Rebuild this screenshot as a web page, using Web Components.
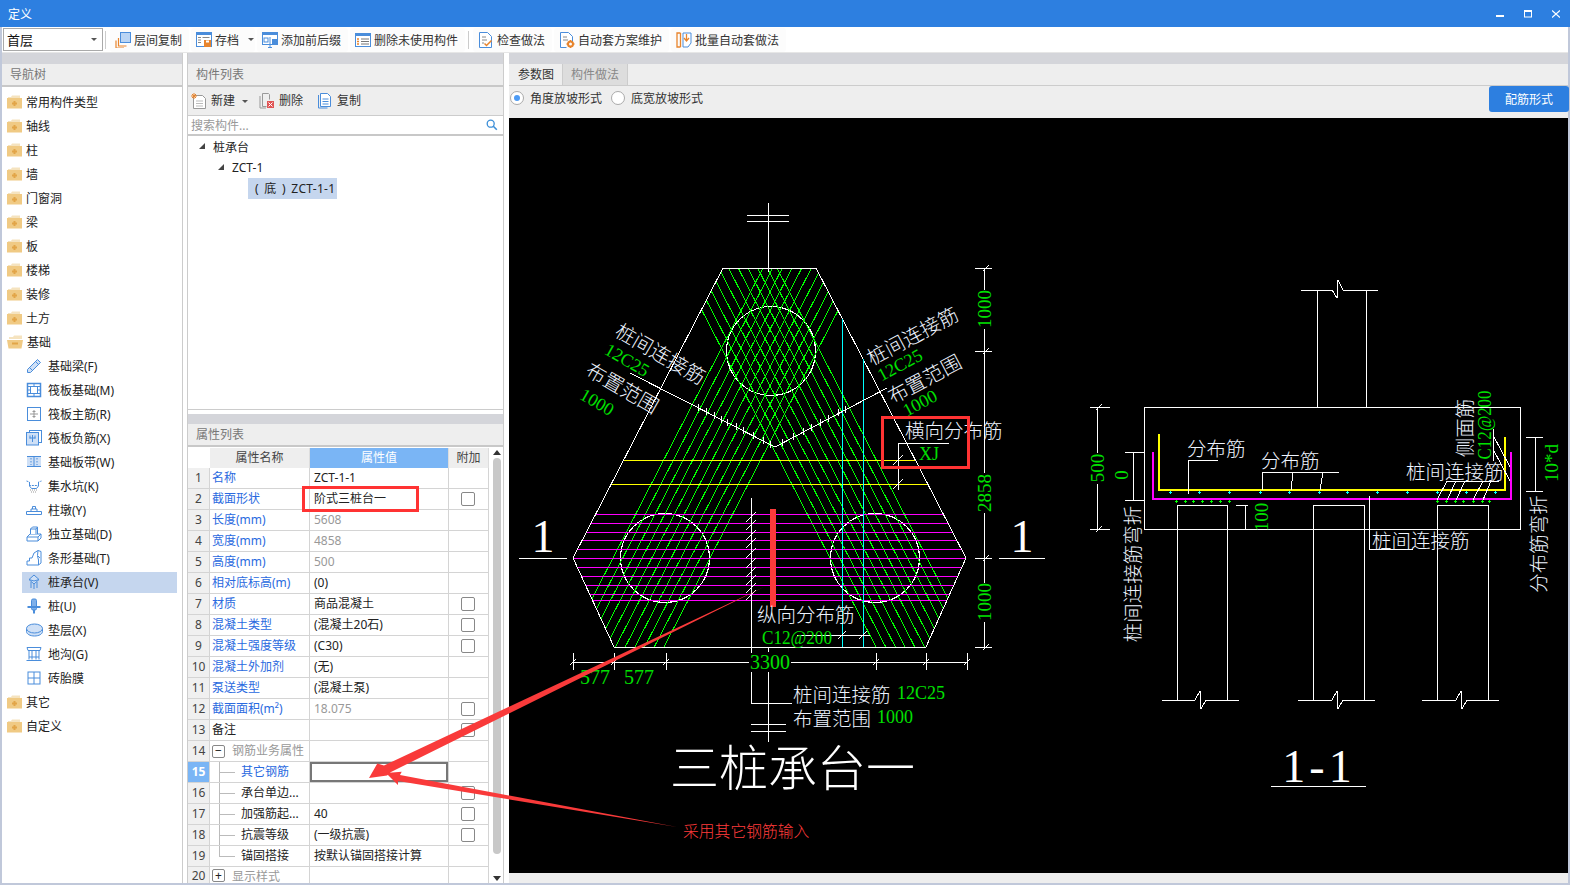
<!DOCTYPE html>
<html lang="zh">
<head>
<meta charset="utf-8">
<title>定义</title>
<style>
    html, body { margin: 0; padding: 0; background: #fff; overflow: hidden; }
</style>
</head>
<body>
<def-app></def-app>
<script>
const BLUE = '#4a8ddb';
const PALE = '#cfe0f6';
const ORANGE = '#e8842c';

const svg16 = (body, size = 16) => `<svg width="${size}" height="${size}" viewBox="0 0 16 16" fill="none" stroke="${BLUE}" stroke-width="1" style="display:block;flex:none">${body}</svg>`;

const ICONS = {
    folder: `<svg width="15" height="14" viewBox="0 0 15 14" style="display:block;flex:none"><path d="M1 2h3l1-1.500h8V3H1z" fill="#f5e3bf"/><rect y="3" width="15" height="10.500" fill="#f0ca84"/><path d="M6.500 6h2v1.500H10v2H8.500V11h-2V9.500H5v-2h1.500z" fill="#e2a548"/></svg>`,
    folderOpen: `<svg width="16" height="14" viewBox="0 0 16 14" style="display:block;flex:none"><path d="M2 2h4l1-1.500h8V4H2z" fill="#f5e3bf"/><path d="M0 5h16l-1.500 8.500h-13z" fill="#f0ca84"/><rect x="5" y="7.500" width="6" height="2" fill="#e2a548"/></svg>`,
    beam: svg16(`<path d="M1.500 11.500 11.500 1.500l3 3-10 10h-3z" fill="${PALE}"/><path d="M3.500 9.500l3 3M9.500 3.500l3 3"/>`),
    raft: svg16(`<rect x="1.500" y="1.500" width="13" height="13" fill="#fff" stroke-width="1.500"/><rect x="4.500" y="4.500" width="7" height="7"/><path d="M1.500 4.500h13M1.500 8h3M11.500 8h3M8 1.500v3M8 11.500v3M1.500 11.500h13"/>`),
    raftMain: svg16(`<rect x="1.500" y="1.500" width="13" height="13"/><path d="M8 4v8M4 8h8M6.500 5.500h3M6.500 10.500h3" stroke="#999"/>`),
    raftNeg: svg16(`<rect x="3.500" y="0.500" width="12" height="12" fill="#fff"/><rect x="0.500" y="2.500" width="12" height="12.500" fill="${PALE}"/><path d="M6.500 5v7M3.500 8h6M4 5.500v3M9 5.500v3"/>`),
    strip: svg16(`<rect x="1" y="2" width="14" height="11" fill="${PALE}" stroke="none"/><path d="M1 2.500h14M1 12.500h14M8 2.500v10"/><path d="M5 4v7M11 4v7" stroke-dasharray="1.500 1.500"/>`),
    sump: svg16(`<path d="M0.500 3l3 1v3.500h9V4l3-1" stroke-dasharray="2 1"/><path d="M3.500 4v4l2 2.500h5l2-2.500V4"/><path d="M4 12h8M5 14h6" stroke="#999" stroke-dasharray="1 1"/>`),
    pier: svg16(`<path d="M0.500 9.500h15v3H0.500z" /><path d="M5 9.500V7h6v2.500M6.500 7V4.500h3V7"/>`),
    footing: svg16(`<path d="M1 11h11v4H1zM1 11l3-3h11l-3 3M12 15l3-3V8"/><path d="M4.500 8V3l2-2h5v7M4.500 3h5.500l1.500-2M10 3v5" fill="#fff"/>`),
    stripF: svg16(`<path d="M1 15v-4h2.500V8H6L8 3l4-2.500 3 1V13l-2.500 2z" fill="#fff"/><path d="M12 .5l-.5 5L14 8M12.500 15v-5l-1-4"/>`),
    cap: svg16(`<path d="M8 1l5 4.500L8 10 3 5.500z" fill="${PALE}"/><path d="M5 8v6M8 10v5M11 8v6M3 5.500 8 7l5-1.500" stroke="${BLUE}"/>`),
    pile: svg16(`<rect x="5.500" y="1" width="5" height="11" rx="1.500" fill="#7fb0ea"/><path d="M1.500 9h13" stroke-width="2"/><path d="M8 12v3.500" stroke-width="2"/>`),
    cushion: `<svg width="17" height="14" viewBox="0 0 17 14" style="display:block;flex:none" fill="${PALE}" stroke="${BLUE}"><path d="M.5 5.500v3c0 2.500 3.500 4.500 8 4.500s8-2 8-4.500v-3"/><ellipse cx="8.500" cy="5.500" rx="8" ry="4.500"/></svg>`,
    trench: svg16(`<path d="M1 1.500h14l-1 3H2zM3 4.500v9M6 4.500v9M10 4.500v9M13 4.500v9M.5 14.500h15M3 11h10"/>`),
    brick: svg16(`<rect x="2" y="2" width="12" height="12"/><path d="M8 2v12M2 8h12"/>`),
    floorCopy: svg16(`<rect x="5.500" y="0.500" width="10" height="10" fill="#b9d4f4" stroke="${BLUE}"/><path d="M3.500 6v8h8M1 8.500V16h8" stroke="${ORANGE}" stroke-width="1.200"/>`),
    archive: svg16(`<rect x="0.500" y="0.500" width="15" height="14" fill="#fff"/><rect x="0" y="0" width="16" height="3" fill="${BLUE}" stroke="none"/><path d="M2 5.500h3M2 8h3M2 10.500h3M6.500 5.500h7" stroke="#888"/><rect x="8" y="8" width="7" height="7" fill="#e8842c" stroke="none"/><rect x="10" y="8.500" width="3" height="2" fill="#fff" stroke="none"/>`),
    prefix: svg16(`<rect x="0.500" y="0.500" width="15" height="12" fill="#fff"/><rect x="0" y="0" width="16" height="3" fill="${BLUE}" stroke="none"/><rect x="2" y="6" width="4" height="4" fill="#fff"/><rect x="10" y="7" width="6" height="6" fill="${BLUE}" stroke="none"/><path d="M8 5v10.500M6 15.500h4" stroke="${BLUE}"/>`),
    unused: svg16(`<rect x="0.500" y="1.500" width="15" height="13" fill="#fff"/><rect x="0" y="1" width="16" height="3" fill="${BLUE}" stroke="none"/><path d="M2 7h2M2 9.500h2M2 12h2" stroke="${ORANGE}" stroke-width="1.500"/><path d="M6 7h8M6 9.500h8M6 12h8" stroke="#777"/>`),
    check: svg16(`<path d="M1.500 0.500h8l4 4v11h-12z" fill="#fff"/><path d="M4 5h4M4 8h5M4 11h2" stroke="#888"/><path d="M6.500 11.500l2 2 5-5" stroke="${ORANGE}" stroke-width="1.500"/>`),
    gearDoc: svg16(`<path d="M1.500 0.500h8l4 4v6M1.500 0.500v15h6" fill="#fff"/><path d="M4 5h4M4 8h5" stroke="#888"/><circle cx="11.500" cy="12" r="2.500" stroke="${ORANGE}" stroke-width="2"/><path d="M11.500 8v1.500M11.500 14.500V16M7.500 12H9M14 12h1.500" stroke="${ORANGE}" stroke-width="1.500"/>`),
    batch: svg16(`<path d="M4.500 1H1v14h3.500M1 1v14M4.500 1v14" stroke="${ORANGE}" stroke-width="1.300"/><path d="M7 1h8v10l-3 4H7z" fill="#fff"/><path d="M10.500 2v6M8 6l2.500 3L13 6" stroke="${ORANGE}" stroke-width="1.300"/>`),
    newDoc: svg16(`<path d="M2.500 2.500h9l3 3v10h-12z" fill="#fff" stroke="#999"/><path d="M5 8h7M5 10.500h7M5 13h7" stroke="#bbb"/><path d="M3 0v6M0 3h6M1 1l4 4M5 1 1 5" stroke="${ORANGE}"/>`),
    delDoc: svg16(`<path d="M3.500 0.500h6l1 1v5M3.500 .5v13h4" stroke="#999"/><path d="M1 3v12h6" stroke="#999"/><rect x="8" y="8" width="7" height="7" fill="#e05555" stroke="none"/><path d="M9.500 9.500l4 4M13.500 9.500l-4 4" stroke="#fff"/>`),
    copyDoc: svg16(`<path d="M1.500 2v13h9" /><path d="M3.500 0.500h7l3 3v10h-10z" fill="#fff"/><path d="M5.500 6h6M5.500 8.500h6M5.500 11h6"/>`),
    search: svg16(`<circle cx="6.500" cy="6.500" r="4" stroke="#3c8fd8" stroke-width="1.500"/><path d="M9.500 9.500l4 4" stroke="#3c8fd8" stroke-width="1.800"/>`, 14)
};

class PanelHead extends HTMLElement {
    constructor() {
        super();
        this.attachShadow({ mode: 'open' });
    }

    connectedCallback() {
        this.shadowRoot.innerHTML = `
            <style>
                :host { display: block; flex: none; }
                .band { height: var(--band, 11px); background: #d4d5da; }
                .title { height: 21px; line-height: 21px; padding-left: 8px; background: #eeeeee; color: #777; border-bottom: 2px solid #c8c8c8; }
            </style>
            <div class="band"></div>
            <div class="title"><slot></slot></div>
        `;
    }
}

class TitleBar extends HTMLElement {
    constructor() {
        super();
        this.attachShadow({ mode: 'open' });
    }

    connectedCallback() {
        this.shadowRoot.innerHTML = `
            <style>
                :host { display: flex; align-items: center; height: 27px; background: #2d7fe0; color: #fff; padding-left: 8px; }
                .name { flex: 1; }
                .btn { width: 28px; display: flex; justify-content: center; }
                svg { display: block; }
            </style>
            <div class="name">定义</div>
            <div class="btn"><svg width="8" height="8" viewBox="0 0 8 8"><rect y="5" width="8" height="2" fill="#fff"/></svg></div>
            <div class="btn"><svg width="8" height="8" viewBox="0 0 8 8" fill="none" stroke="#fff"><rect x=".5" y="1" width="7" height="6"/><path d="M0 1h8" stroke-width="2"/></svg></div>
            <div class="btn"><svg width="8" height="8" viewBox="0 0 8 8" stroke="#fff" stroke-width="1.300"><path d="M0 .5l8 7M8 .5l-8 7"/></svg></div>
        `;
    }
}

class ToolItem extends HTMLElement {
    constructor() {
        super();
        this.attachShadow({ mode: 'open' });
    }

    connectedCallback() {
        const caret = this.hasAttribute('caret');
        this.shadowRoot.innerHTML = `
            <style>
                :host { display: flex; align-items: center; gap: 3px; height: 24px; padding: 0 7px 0 5px; margin-right: 2px; background: #fcfcfc; border-radius: 3px; color: #333; white-space: nowrap; }
                .caret { width: 0; height: 0; margin-right: -6px; border: 3.5px solid transparent; border-top: 3.5px solid #555; border-bottom: 0; margin-left: 6px; }
            </style>
            ${ICONS[this.getAttribute('icon')]}
            <slot></slot>
            ${caret ? '<span class="caret"></span>' : ''}
        `;
    }
}

class TopToolbar extends HTMLElement {
    constructor() {
        super();
        this.attachShadow({ mode: 'open' });
    }

    connectedCallback() {
        this.shadowRoot.innerHTML = `
            <style>
                :host { display: flex; align-items: center; height: 25px; background: #fff; border-bottom: 1px solid #e6e6e6; }
                .combo { height: 21px; margin-left: 1px; margin-right: 2px; border: 1px solid #aaa; display: flex; align-items: center; justify-content: space-between; padding: 0 5px 0 3px; box-sizing: content-box; width: 90px; font-size: 13px; color: #111; }
                .combo i { width: 0; height: 0; border: 3.5px solid transparent; border-top: 3.5px solid #555; border-bottom: 0; }
                .sep { width: 1px; height: 18px; background: #ccc; margin-right: 4px; }
            </style>
            <div class="combo"><span>首层</span><i></i></div>
            <div class="sep"></div>
            <tool-item icon="floorCopy">层间复制</tool-item>
            <tool-item icon="archive" caret>存档</tool-item>
            <tool-item icon="prefix">添加前后缀</tool-item>
            <tool-item icon="unused">删除未使用构件</tool-item>
            <div class="sep" style="margin-left:1px"></div>
            <tool-item icon="check">检查做法</tool-item>
            <tool-item icon="gearDoc">自动套方案维护</tool-item>
            <tool-item icon="batch">批量自动套做法</tool-item>
        `;
    }
}

class NavRow extends HTMLElement {
    constructor() {
        super();
        this.attachShadow({ mode: 'open' });
    }

    connectedCallback() {
        this.shadowRoot.innerHTML = `
            <style>
                :host { display: flex; align-items: center; height: 24px; padding-left: 5px; gap: 4px; color: #222; }
                :host([child]) { padding-left: 0; margin-left: 20px; margin-right: 5px; }
                .in { display: flex; align-items: center; height: 21px; flex: 1; }
                :host([child]) .in { padding-left: 4px; gap: 6px; }
                :host(:not([child])) .in { gap: 4px; }
                :host([selected]) .in { background: #c5d6ee; }
                .slotbox { width: 16px; display: flex; justify-content: center; flex: none; }
            </style>
            <div class="in">
                ${this.hasAttribute('child') ? `<span class="slotbox">${ICONS[this.getAttribute('icon')]}</span>` : ICONS[this.getAttribute('icon')]}
                <span><slot></slot></span>
            </div>
        `;
    }
}

class NavTree extends HTMLElement {
    constructor() {
        super();
        this.attachShadow({ mode: 'open' });
    }

    connectedCallback() {
        this.shadowRoot.innerHTML = `
            <style>
                :host { display: flex; flex-direction: column; width: 181px; flex: none; border-right: 1px solid #ccc; background: #fff; box-sizing: border-box; }
                .rows { padding-top: 3px; }
            </style>
            <panel-head>导航树</panel-head>
            <div class="rows">
                <nav-row icon="folder">常用构件类型</nav-row>
                <nav-row icon="folder">轴线</nav-row>
                <nav-row icon="folder">柱</nav-row>
                <nav-row icon="folder">墙</nav-row>
                <nav-row icon="folder">门窗洞</nav-row>
                <nav-row icon="folder">梁</nav-row>
                <nav-row icon="folder">板</nav-row>
                <nav-row icon="folder">楼梯</nav-row>
                <nav-row icon="folder">装修</nav-row>
                <nav-row icon="folder">土方</nav-row>
                <nav-row icon="folderOpen">基础</nav-row>
                <nav-row child icon="beam">基础梁(F)</nav-row>
                <nav-row child icon="raft">筏板基础(M)</nav-row>
                <nav-row child icon="raftMain">筏板主筋(R)</nav-row>
                <nav-row child icon="raftNeg">筏板负筋(X)</nav-row>
                <nav-row child icon="strip">基础板带(W)</nav-row>
                <nav-row child icon="sump">集水坑(K)</nav-row>
                <nav-row child icon="pier">柱墩(Y)</nav-row>
                <nav-row child icon="footing">独立基础(D)</nav-row>
                <nav-row child icon="stripF">条形基础(T)</nav-row>
                <nav-row child selected icon="cap">桩承台(V)</nav-row>
                <nav-row child icon="pile">桩(U)</nav-row>
                <nav-row child icon="cushion">垫层(X)</nav-row>
                <nav-row child icon="trench">地沟(G)</nav-row>
                <nav-row child icon="brick">砖胎膜</nav-row>
                <nav-row icon="folder">其它</nav-row>
                <nav-row icon="folder">自定义</nav-row>
            </div>
        `;
    }
}

class CompList extends HTMLElement {
    constructor() {
        super();
        this.attachShadow({ mode: 'open' });
    }

    connectedCallback() {
        const tri = '<svg width="7" height="7" viewBox="0 0 7 7" style="flex:none"><path d="M6 0v6H0z" fill="#444"/></svg>';
        this.shadowRoot.innerHTML = `
            <style>
                :host { display: flex; flex-direction: column; height: 357px; flex: none; box-sizing: border-box; border-bottom: 1px solid #ccc; background: #fff; }
                .bar { display: flex; align-items: center; height: 28px; background: #eee; border-bottom: 1px solid #ccc; padding-left: 3px; color: #333; flex: none; }
                .bar div { display: flex; align-items: center; gap: 4px; }
                .bar span { margin-top: -2px; }
                .bar .caret { width: 0; height: 0; border: 3.5px solid transparent; border-top: 3.5px solid #555; border-bottom: 0; margin-left: 3px; margin-top: 0; }
                .search { display: flex; align-items: center; justify-content: space-between; height: 18px; padding: 0 4px 0 3px; color: #999; border-bottom: 2px solid #c8c8c8; flex: none; }
                .row { display: flex; align-items: center; height: 21px; gap: 7px; color: #222; }
                .sel { background: #c5d6ee; padding: 0 3px 0 7px; height: 21px; line-height: 21px; margin-left: 60px; width: 79px; white-space: pre; color: #222; letter-spacing: .3px; word-spacing: 2px; }
            </style>
            <panel-head>构件列表</panel-head>
            <div class="bar">
                <div style="width:68px">${ICONS.newDoc}<span>新建</span><span class="caret"></span></div>
                <div style="width:58px">${ICONS.delDoc}<span>删除</span></div>
                <div>${ICONS.copyDoc}<span>复制</span></div>
            </div>
            <div class="search"><span>搜索构件...</span>${ICONS.search}</div>
            <div class="row" style="padding-left:11px">${tri}<span>桩承台</span></div>
            <div class="row" style="padding-left:30px">${tri}<span>ZCT-1</span></div>
            <div class="sel">( 底 ) ZCT-1-1</div>
        `;
    }
}

class PropRow extends HTMLElement {
    constructor() {
        super();
        this.attachShadow({ mode: 'open' });
    }

    connectedCallback() {
        const kind = this.getAttribute('kind') || 'plain';
        const toggle = this.getAttribute('toggle');
        let nameCell = `<span class="${kind}">${this.getAttribute('name')}</span>`;
        if (toggle) {
            nameCell = `<span class="tog">${toggle}</span><span class="group">${this.getAttribute('name')}</span>`;
        }
        if (this.hasAttribute('branch')) {
            nameCell = `<span class="branch ${this.hasAttribute('last') ? 'last' : ''}"></span><span class="${kind}">${this.getAttribute('name')}</span>`;
        }
        this.shadowRoot.innerHTML = `
            <style>
                :host { display: grid; grid-template-columns: 22px 100px 139px 40px; height: 21px; color: #222; }
                :host([tail]) { height: 17px; }
                .c { box-sizing: border-box; display: flex; align-items: center; height: 21px; border-bottom: 1px solid #d4d4d4; border-right: 1px solid #d4d4d4; white-space: nowrap; overflow: hidden; padding-bottom: 2px; }
                :host([tail]) .c { height: 17px; padding-bottom: 0; border-bottom: 0; }
                .n { justify-content: center; background: #f0f0f0; color: #444; }
                :host([current]) .n { background: #7ab5f5; color: #fff; font-weight: 700; }
                .name { padding-left: 2px; }
                .val { padding-left: 4px; }
                :host([current]) .val { box-shadow: inset 0 0 0 2px #777; }
                .val.gray { color: #999; }
                .link { color: #2a6ae0; }
                .group { color: #999; margin-left: 7px; }
                .tog { box-sizing: border-box; width: 13px; height: 13px; border: 1px solid #888; border-radius: 2px; display: flex; align-items: center; justify-content: center; font-size: 12px; line-height: 1; color: #222; flex: none; margin-top: 2px; }
                :host([tail]) .tog { margin-top: 0; }
                .branch { align-self: stretch; width: 16px; margin: 0 6px -2px 7px; flex: none; background: linear-gradient(#bbb, #bbb) 0 50% / 16px 1px no-repeat, linear-gradient(#bbb, #bbb) 0 0 / 1px 100% no-repeat; }
                .branch.last { background: linear-gradient(#bbb, #bbb) 0 50% / 16px 1px no-repeat, linear-gradient(#bbb, #bbb) 0 0 / 1px 50% no-repeat; }
                .x { justify-content: center; padding-right: 2px; padding-bottom: 0; }
                .box { box-sizing: border-box; width: 14px; height: 14px; border: 1px solid #888; border-radius: 2px; background: #fff; }
            </style>
            <div class="c n">${this.getAttribute('n')}</div>
            <div class="c name">${nameCell}</div>
            <div class="c val ${this.hasAttribute('gray') ? 'gray' : ''}">${this.getAttribute('value') || ''}</div>
            <div class="c x">${this.hasAttribute('check') ? '<span class="box"></span>' : ''}</div>
        `;
    }
}

class PropTable extends HTMLElement {
    constructor() {
        super();
        this.attachShadow({ mode: 'open' });
    }

    connectedCallback() {
        this.shadowRoot.innerHTML = `
            <style>
                :host { display: flex; flex-direction: column; height: 469px; flex: none; overflow: hidden; background: #fff; --band: 10px; }
                .body { display: flex; flex: 1; min-height: 0; padding-top: 1px; }
                .table { width: 301px; flex: none; }
                .head { display: grid; grid-template-columns: 22px 100px 139px 40px; height: 20px; line-height: 19px; text-align: center; color: #444; }
                .head div { background: #eee; border-right: 1px solid #ddd; }
                .head div:first-child { background: #fff; border: 0; }
                .head .on { background: #7ab5f5; color: #fff; }
                .scroll { flex: 1; display: flex; flex-direction: column; align-items: center; padding: 1px 0 0 2px; height: 430px; }
                .up { width: 0; height: 0; border: 4px solid transparent; border-top: 0; border-bottom: 5px solid #333; margin: 1px 0 3px; flex: none; }
                .thumb { width: 8px; height: 396px; background: #c8c8c8; border-radius: 4px; flex: none; }
                .down { width: 0; height: 0; border: 4px solid transparent; border-bottom: 0; border-top: 5px solid #333; margin-top: 22px; flex: none; }
            </style>
            <panel-head>属性列表</panel-head>
            <div class="body">
                <div class="table">
                    <div class="head"><div></div><div>属性名称</div><div class="on">属性值</div><div>附加</div></div>
                    <prop-row n="1" kind="link" name="名称" value="ZCT-1-1"></prop-row>
                    <prop-row n="2" kind="link" name="截面形状" value="阶式三桩台一" check></prop-row>
                    <prop-row n="3" kind="link" name="长度(mm)" value="5608" gray></prop-row>
                    <prop-row n="4" kind="link" name="宽度(mm)" value="4858" gray></prop-row>
                    <prop-row n="5" kind="link" name="高度(mm)" value="500" gray></prop-row>
                    <prop-row n="6" kind="link" name="相对底标高(m)" value="(0)"></prop-row>
                    <prop-row n="7" kind="link" name="材质" value="商品混凝土" check></prop-row>
                    <prop-row n="8" kind="link" name="混凝土类型" value="(混凝土20石)" check></prop-row>
                    <prop-row n="9" kind="link" name="混凝土强度等级" value="(C30)" check></prop-row>
                    <prop-row n="10" kind="link" name="混凝土外加剂" value="(无)"></prop-row>
                    <prop-row n="11" kind="link" name="泵送类型" value="(混凝土泵)"></prop-row>
                    <prop-row n="12" kind="link" name="截面面积(m²)" value="18.075" gray check></prop-row>
                    <prop-row n="13" name="备注" check></prop-row>
                    <prop-row n="14" toggle="−" name="钢筋业务属性"></prop-row>
                    <prop-row n="15" current branch kind="link" name="其它钢筋"></prop-row>
                    <prop-row n="16" branch name="承台单边..." check></prop-row>
                    <prop-row n="17" branch name="加强筋起..." value="40" check></prop-row>
                    <prop-row n="18" branch name="抗震等级" value="(一级抗震)" check></prop-row>
                    <prop-row n="19" branch last name="锚固搭接" value="按默认锚固搭接计算"></prop-row>
                    <prop-row n="20" tail toggle="+" name="显示样式"></prop-row>
                </div>
                <div class="scroll"><i class="up"></i><div class="thumb"></div><i class="down"></i></div>
            </div>
        `;
    }
}

class CadDrawing extends HTMLElement {
    constructor() {
        super();
        this.attachShadow({ mode: 'open' });
    }

    connectedCallback() {
        this.shadowRoot.innerHTML = `
            <style>
                :host { display: block; height: 755px; background: #000; flex: none; }
                svg { display: block; }
                text { dominant-baseline: central; }
                .cn { font-family: "Noto Sans CJK SC", sans-serif; font-weight: 300; }
                .num { font-family: "Liberation Serif", serif; }
            </style>
            <svg width="1059" height="755" viewBox="509 118 1059 755" shape-rendering="crispEdges">${this.draw()}</svg>
        `;
    }

    draw() {
        const WHITE = '#fff', GREEN = '#00ff00', TXT = '#00e000', MAG = '#ff00ff', YEL = '#ffff00', CY = '#00ffff';
        const line = (x1, y1, x2, y2, c = WHITE, w = 1) => `<line x1="${x1}" y1="${y1}" x2="${x2}" y2="${y2}" stroke="${c}" stroke-width="${w}"/>`;
        const poly = (pts, c = WHITE, w = 1) => `<polyline points="${pts}" fill="none" stroke="${c}" stroke-width="${w}"/>`;
        const cn = (x, y, s, size = 19.5, rot = 0, anchor = 'start', fill = '#eef4ff') => `<text class="cn" x="${x}" y="${y}" font-size="${size}" fill="${fill}" text-anchor="${anchor}" ${rot ? `transform="rotate(${rot} ${x} ${y})"` : ''}>${s}</text>`;
        const num = (x, y, s, size = 19, rot = 0, anchor = 'start', fill = TXT, len = 0) => `<text class="num" x="${x}" y="${y}" font-size="${size}" fill="${fill}" text-anchor="${anchor}" ${len ? `textLength="${len}" lengthAdjust="spacingAndGlyphs"` : ''} ${rot ? `transform="rotate(${rot} ${x} ${y})"` : ''}>${s}</text>`;
        const slash = (x, y, r = 5) => line(x - r, y + r, x + r, y - r);
        const HEX = '723,268 816,268 966,558 926,647 614,647 573,558';
        let o = `<defs><clipPath id="hex"><polygon points="${HEX}"/></clipPath></defs>`;

        // pile circles sit under the rebar
        o += `<circle cx="771" cy="351" r="44.500" fill="none" stroke="${WHITE}"/>`;
        o += `<circle cx="665" cy="558" r="44.500" fill="none" stroke="${WHITE}"/>`;
        o += `<circle cx="875" cy="558" r="44.500" fill="none" stroke="${WHITE}"/>`;

        // green rebar bands, clipped to the cap outline
        let bands = '';
        const k = 150 / 290;
        for (let i = 0; i < 11; i++) {
            const a = 643 + i * 9.700;
            bands += line(a + 250 * k, 250, a - 170 * k, 670, GREEN);
            const b = 897 - i * 9.700;
            bands += line(b - 250 * k, 250, b + 170 * k, 670, GREEN);
        }
        o += `<g clip-path="url(#hex)">${bands}`;
        [514, 523, 532, 540, 549, 558, 567, 576, 585, 594, 600].forEach(y => { o += line(560, y, 980, y, MAG); });
        o += line(560, 460, 980, 460, YEL) + line(560, 484, 980, 484, YEL);
        o += `</g>`;
        o += `<polygon points="${HEX}" fill="none" stroke="${WHITE}"/>`;
        o += line(842, 319, 842, 647, CY) + line(863, 359, 863, 647, CY);

        // leaders with hatch ticks
        o += poly('630,373 775,447 887,388');
        [698, 706, 714, 721, 727, 736, 743, 753, 763, 770].forEach(x => { o += line(x, 407 + (x - 698) * 0.510 - 3, x, 407 + (x - 698) * 0.510 + 4); });
        [782, 793, 803, 811, 820, 828, 838, 845].forEach(x => { o += line(x, 443 - (x - 782) * 0.530 - 4, x, 443 - (x - 782) * 0.530 + 3); });

        // top axis
        o += line(768, 203, 768, 272) + line(747, 215, 789, 215) + line(747, 221, 789, 221);
        // right dimension chain
        o += line(984, 268, 984, 290) + line(984, 329, 984, 473) + line(984, 513, 984, 583) + line(984, 622, 984, 647);
        [268, 351, 558, 647].forEach(y => { o += line(975, y, 992, y) + slash(986, y, 3); });
        o += num(984, 309, '1000', 19, -90, 'middle') + num(984, 493, '2858', 19, -90, 'middle') + num(984, 602, '1000', 19, -90, 'middle');
        // section labels
        o += num(543, 536, '1', 46, 0, 'middle', WHITE) + line(519, 558, 567, 558);
        o += num(1022, 536, '1', 46, 0, 'middle', WHITE) + line(999, 558, 1045, 558);
        // bottom dimension
        o += line(573, 662, 749, 662) + line(791, 662, 966, 662);
        [573, 614, 666, 876, 926, 967].forEach(x => { o += line(x, 653, x, 670) + slash(x, 662, 3); });
        o += num(770, 662, '3300', 20, 0, 'middle') + num(580, 677, '577', 20) + num(624, 677, '577', 20);
        // vertical section line + hatches
        o += line(751, 498, 751, 653) + line(751, 672, 751, 703) + line(751, 703, 792, 703);
        [517, 525, 535, 543, 553, 563, 572, 580, 588, 595].forEach(y => { o += slash(751, y, 5); });
        o += line(768, 647, 768, 652) + line(768, 672, 768, 742) + line(751, 724, 786, 724) + line(751, 731, 786, 731);
        // red thick bar
        o += `<rect x="770" y="509" width="6" height="98" fill="#fc3a3a"/>`;

        // slanted labels
        o += cn(661, 353, '桩间连接筋', 20, 30, 'middle') + num(627, 360, '12C25', 18, 30, 'middle');
        o += cn(623, 387, '布置范围', 20, 30, 'middle') + num(597, 402, '1000', 18, 30, 'middle');
        o += cn(912, 335, '桩间连接筋', 20, -28, 'middle') + num(900, 365, '12C25', 18, -28, 'middle');
        o += cn(924, 378, '布置范围', 20, -28, 'middle') + num(920, 403, '1000', 18, -28, 'middle');
        // XJ note
        o += cn(905, 429, '横向分布筋') + num(919, 454, 'XJ', 18);
        o += poly('898,490 898,443 949,443') + slash(898, 460, 5) + slash(898, 484, 5);
        o += `<rect x="882.500" y="417.500" width="86" height="50" fill="none" stroke="#f33" stroke-width="3"/>`;
        // longitudinal note
        o += line(797, 635, 870, 635) + slash(842, 635, 4) + slash(863, 635, 4);
        o += cn(757, 613, '纵向分布筋') + num(762, 637, 'C12@200', 19, 0, 'start', TXT, 70);
        o += cn(793, 693, '桩间连接筋') + num(897, 693, '12C25', 18);
        o += cn(793, 717, '布置范围') + num(877, 717, '1000', 18);
        o += cn(670, 764, '三桩承台一', 49, 0, 'start', WHITE);
        o += cn(683, 830, '采用其它钢筋输入', 15.800, 0, 'start', '#ff3b3b');

        // section 1-1
        o += `<rect x="1144.500" y="407.500" width="376" height="122" fill="none" stroke="${WHITE}"/>`;
        o += line(1317, 290, 1317, 407) + line(1366, 290, 1366, 407);
        o += poly('1301,290 1332,290 1337,298 1338,280 1343,290 1378,290');
        [[1177, 1227, 1162, 1239, 1195], [1313, 1364, 1298, 1375, 1332], [1437, 1488, 1422, 1499, 1456]].forEach(([a, b, l, r, m]) => {
            o += line(a, 505, b, 505) + line(a, 505, a, 700) + line(b, 505, b, 700);
            o += poly(`${l},700 ${m},700 ${m + 5},691 ${m + 6},709 ${m + 11},700 ${r},700`);
        });
        o += poly('1159,434 1159,490 1505,490 1505,437', YEL, 2);
        o += poly('1153,452 1153,499 1511,499 1511,452', MAG, 2);
        [301, 388, 478, 569, 656, 746, 832, 922, 1012, 1100, 1189, 1276].forEach(z => {
            const x = Math.round(1070 + z / 3);
            o += line(x - 1, 492, x + 2, 492, CY) + line(x, 491, x, 494, CY);
        });
        [319, 346, 370, 397, 424, 451, 478, 1100, 1127, 1154, 1180, 1208, 1235, 1258].forEach(z => {
            const x = Math.round(1070 + z / 3);
            o += line(x - 1, 501, x + 2, 501, GREEN) + line(x, 500, x, 503, GREEN);
        });
        // dims
        o += line(1097, 407, 1097, 453) + line(1097, 484, 1097, 529) + line(1090, 407, 1110, 407) + line(1090, 529, 1110, 529) + slash(1099, 407, 3) + slash(1099, 529, 3);
        o += num(1097, 468, '500', 19, -90, 'middle') + num(1121, 475, '0', 19, -90, 'middle');
        o += line(1133, 452, 1133, 500) + line(1125, 452, 1145, 452) + line(1125, 500, 1145, 500);
        o += line(1535, 437, 1535, 491) + line(1526, 437, 1543, 437) + line(1526, 491, 1543, 491) + num(1551, 463, '10*d', 19, -90, 'middle');
        o += line(1245, 505, 1245, 529) + line(1236, 505, 1248, 505) + num(1261, 517, '100', 19, -90, 'middle');
        // leaders
        o += poly('1188,494 1188,460 1218,460') + poly('1262,490 1263,472 1339,472') + line(1291, 490, 1293, 472) + line(1320, 490, 1323, 472);
        [[1437, 1447], [1447, 1456], [1456, 1465], [1473, 1483], [1483, 1491]].forEach(([a, b]) => { o += line(a, 500, b, 481); });
        o += line(1447, 481, 1499, 481);
        o += poly('1369,496 1369,549 1413,549');
        o += line(1493, 429, 1493, 461) + line(1493, 435, 1510, 467) + line(1493, 449, 1510, 481);
        // labels
        o += cn(1187, 447, '分布筋') + cn(1261, 459, '分布筋') + cn(1406, 470, '桩间连接筋') + cn(1372, 539, '桩间连接筋');
        o += cn(1463, 428, '侧面筋', 19.500, -90, 'middle') + num(1484, 425, 'C12@200', 19, -90, 'middle', TXT, 69);
        o += cn(1131, 574, '桩间连接筋弯折', 19.500, -90, 'middle') + cn(1537, 544, '分布筋弯折', 19.500, -90, 'middle');
        o += `<text class="num" x="1319" y="766" font-size="46" fill="${WHITE}" text-anchor="middle" letter-spacing="4">1-1</text>` + line(1271, 786, 1366, 786);
        return o;
    }
}

class ParamView extends HTMLElement {
    constructor() {
        super();
        this.attachShadow({ mode: 'open' });
    }

    connectedCallback() {
        this.shadowRoot.innerHTML = `
            <style>
                :host { display: flex; flex-direction: column; flex: 1; min-width: 0; background: #eee; }
                .band { height: 11px; background: #d4d5da; flex: none; }
                .tabs { display: flex; height: 21px; border-bottom: 1px solid #ccc; padding-left: 1px; flex: none; }
                .tab { line-height: 21px; text-align: center; color: #333; width: 52px; border-right: 1px solid #ccc; }
                .tab.off { width: 64px; background: #ddd; color: #888; }
                .opts { display: flex; align-items: center; height: 32px; color: #333; flex: none; }
                .radio { box-sizing: border-box; width: 14px; height: 14px; border-radius: 50%; border: 1px solid #aaa; background: #fff; margin-left: 1px; margin-right: 6px; margin-top: -8px; display: flex; align-items: center; justify-content: center; }
                .radio i { width: 6px; height: 6px; border-radius: 50%; background: #4d9bf5; }
                .lbl { margin-top: -8px; }
                .btn { margin-left: auto; margin-top: -6px; width: 80px; height: 26px; line-height: 27px; border-radius: 3px; background: #2d7fe0; color: #fff; text-align: center; margin-right: -1px; }
            </style>
            <div class="band"></div>
            <div class="tabs"><div class="tab">参数图</div><div class="tab off">构件做法</div></div>
            <div class="opts">
                <span class="radio"><i></i></span><span class="lbl" style="margin-right:8px">角度放坡形式</span>
                <span class="radio"></span><span class="lbl">底宽放坡形式</span>
                <div class="btn">配筋形式</div>
            </div>
            <cad-drawing></cad-drawing>
        `;
    }
}

class RedNotes extends HTMLElement {
    constructor() {
        super();
        this.attachShadow({ mode: 'open' });
    }

    connectedCallback() {
        // annotations pasted over the screenshot, they cross several panels
        this.shadowRoot.innerHTML = `
            <style>
                :host { position: absolute; left: 0; top: 0; width: 1570px; height: 885px; pointer-events: none; }
                svg { display: block; }
            </style>
            <svg width="1570" height="885" viewBox="0 0 1570 885">
                <rect x="303.500" y="487.500" width="114" height="23" fill="none" stroke="#f33" stroke-width="3" shape-rendering="crispEdges"/>
                <polygon points="369,778 377.300,763.500 384,765.500 766,586 391,772 387,775.500" fill="#f93a3a"/>
                <polygon points="386,773 401.700,771.700 400,775 677,827 398,781 398,785" fill="#f93a3a"/>
            </svg>
        `;
    }
}

class DefApp extends HTMLElement {
    constructor() {
        super();
        this.attachShadow({ mode: 'open' });
    }

    connectedCallback() {
        this.shadowRoot.innerHTML = `
            <style>
                :host { display: block; position: relative; width: 1570px; height: 885px; overflow: hidden; font: 12px "Noto Sans", "Noto Sans CJK SC", sans-serif; background: #c0c8da; }
                .wrap { margin: 0 2px; height: 856px; background: #fff; display: flex; flex-direction: column; }
                .main { display: flex; height: 830px; background: #fff; }
                .mid { display: flex; flex-direction: column; width: 317px; flex: none; margin-left: 4px; margin-right: 5px; border-left: 1px solid #ccc; border-right: 1px solid #ccc; box-sizing: border-box; gap: 4px; }
            </style>
            <title-bar></title-bar>
            <div class="wrap">
                <top-toolbar></top-toolbar>
                <div class="main">
                    <nav-tree></nav-tree>
                    <div class="mid">
                        <comp-list></comp-list>
                        <prop-table></prop-table>
                    </div>
                    <param-view></param-view>
                </div>
            </div>
            <red-notes></red-notes>
        `;
    }
}

window.customElements.define('panel-head', PanelHead);
window.customElements.define('title-bar', TitleBar);
window.customElements.define('tool-item', ToolItem);
window.customElements.define('top-toolbar', TopToolbar);
window.customElements.define('nav-row', NavRow);
window.customElements.define('nav-tree', NavTree);
window.customElements.define('comp-list', CompList);
window.customElements.define('prop-row', PropRow);
window.customElements.define('prop-table', PropTable);
window.customElements.define('cad-drawing', CadDrawing);
window.customElements.define('param-view', ParamView);
window.customElements.define('red-notes', RedNotes);
window.customElements.define('def-app', DefApp);
</script>
</body>
</html>
